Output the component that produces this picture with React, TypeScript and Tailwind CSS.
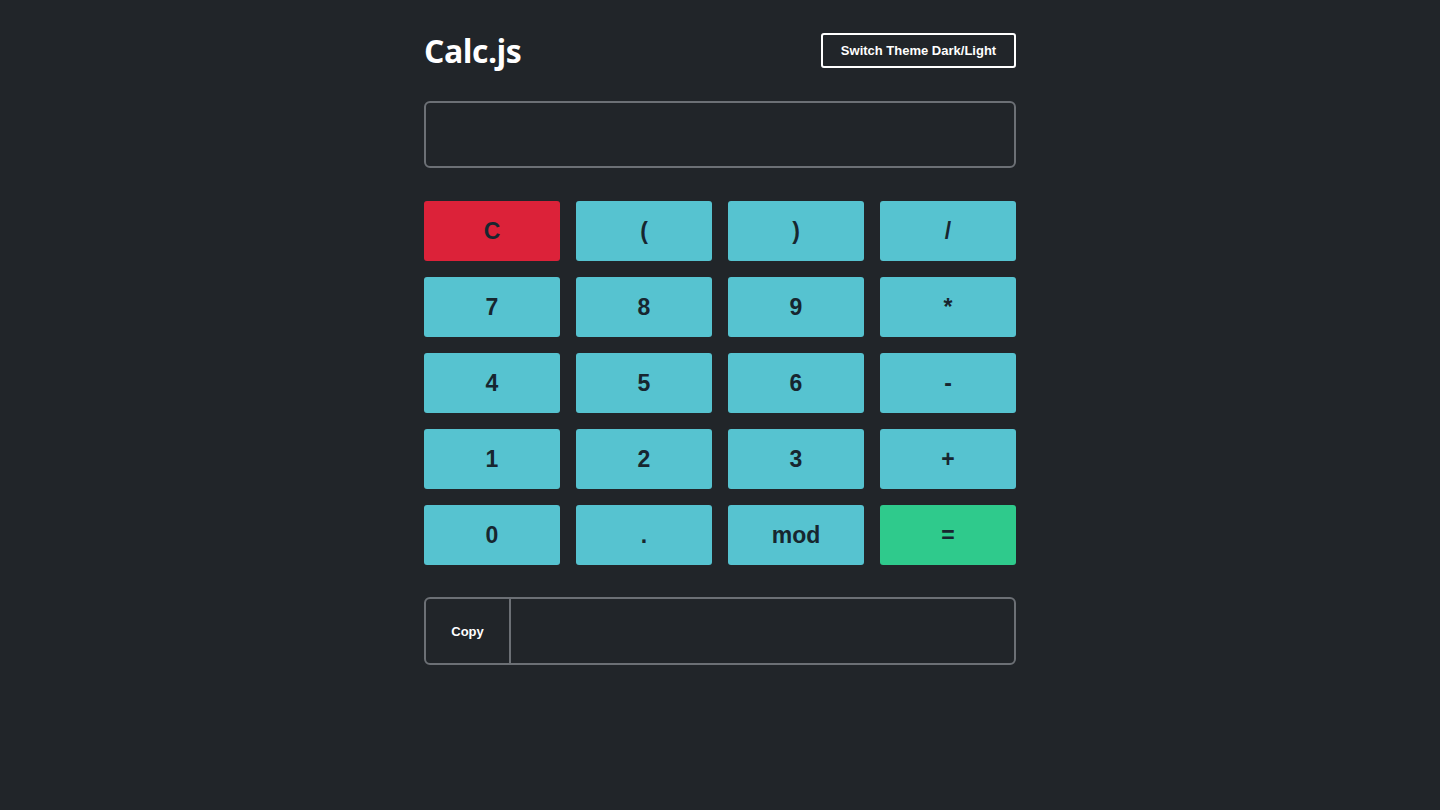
const keys: { label: string; tone: "red" | "cyan" | "green" }[] = [
  { label: "C", tone: "red" },
  { label: "(", tone: "cyan" },
  { label: ")", tone: "cyan" },
  { label: "/", tone: "cyan" },
  { label: "7", tone: "cyan" },
  { label: "8", tone: "cyan" },
  { label: "9", tone: "cyan" },
  { label: "*", tone: "cyan" },
  { label: "4", tone: "cyan" },
  { label: "5", tone: "cyan" },
  { label: "6", tone: "cyan" },
  { label: "-", tone: "cyan" },
  { label: "1", tone: "cyan" },
  { label: "2", tone: "cyan" },
  { label: "3", tone: "cyan" },
  { label: "+", tone: "cyan" },
  { label: "0", tone: "cyan" },
  { label: ".", tone: "cyan" },
  { label: "mod", tone: "cyan" },
  { label: "=", tone: "green" },
];

const toneClass = {
  red: "bg-[#dc2239]",
  cyan: "bg-[#56c3d0]",
  green: "bg-[#2fca8c]",
};

export default function App() {
  return (
    <div className="min-h-[810px] bg-[#212529] font-['Liberation_Sans',Arial,sans-serif]">
      <main className="mx-auto w-[592px] pt-[33px]">
        <header className="flex h-[35px] items-center justify-between">
          <h1 className="font-['Open_Sans',sans-serif] text-[32px] font-bold leading-none tracking-[-0.5px] text-white">
            Calc.js
          </h1>
          <button className="h-[35px] w-[195px] rounded-[3px] border-2 border-white text-[13px] font-bold text-white">
            Switch Theme Dark/Light
          </button>
        </header>

        <div className="mt-[33px] h-[67px] rounded-[6px] border-2 border-[#6c7075]" />

        <div className="mt-[33px] grid grid-cols-4 gap-4">
          {keys.map((k) => (
            <button
              key={k.label}
              className={`h-[60px] rounded-[3px] text-[23px] font-bold text-[#17262f] ${toneClass[k.tone]}`}
            >
              {k.label}
            </button>
          ))}
        </div>

        <div className="mt-8 flex h-[68px] rounded-[6px] border-2 border-[#6c7075]">
          <button className="w-[85px] border-r-2 border-[#6c7075] pt-[2px] text-[13px] font-bold text-white">
            Copy
          </button>
          <div className="flex-1" />
        </div>
      </main>
    </div>
  );
}
